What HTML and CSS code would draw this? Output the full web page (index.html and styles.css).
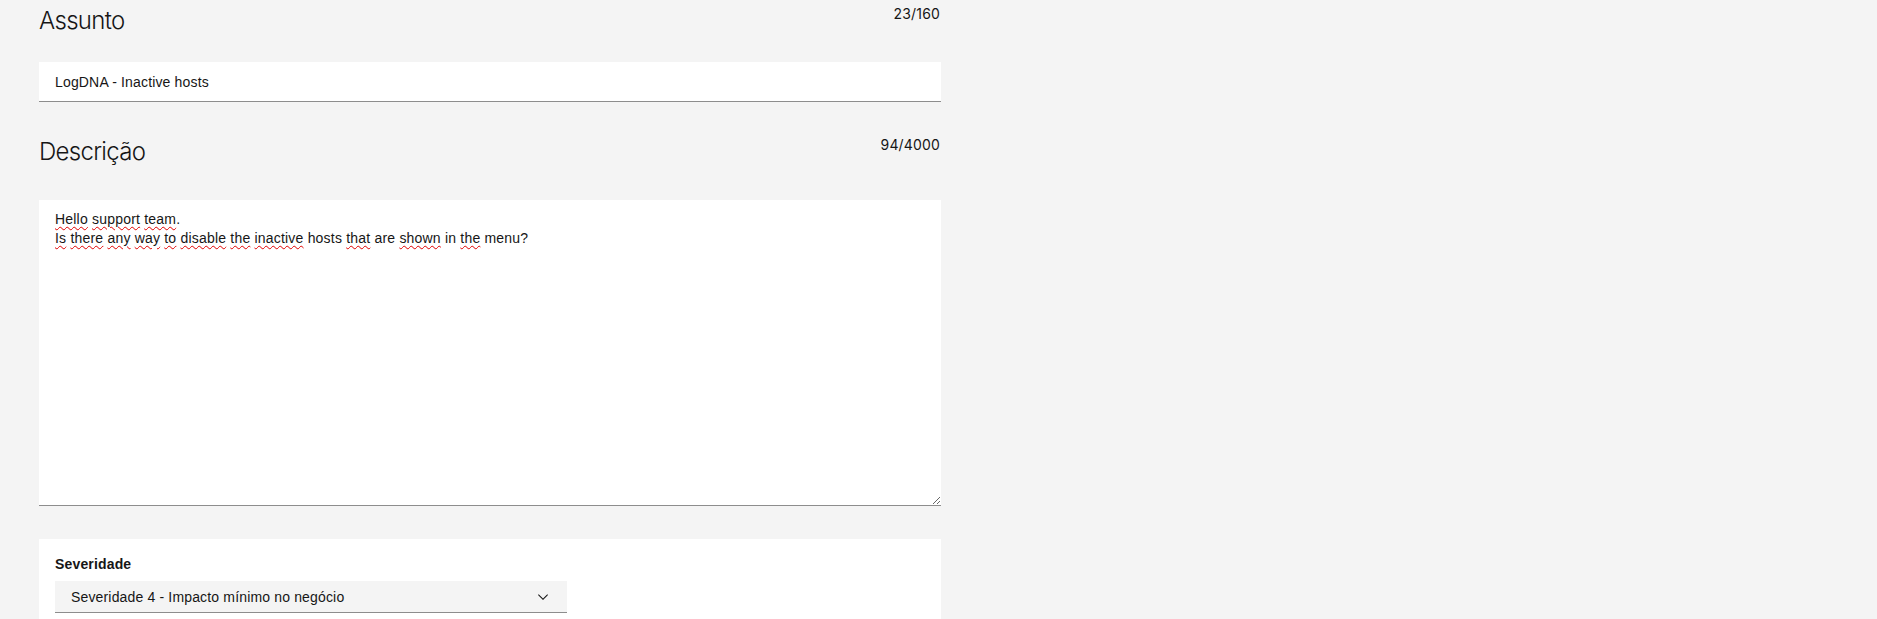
FILE: index.html
```html
<!DOCTYPE html>
<html lang="pt">
<head>
<meta charset="utf-8">
<title>Caso de suporte</title>
<link rel="stylesheet" href="styles.css">
</head>
<body>
<main class="form">
  <section class="field">
    <div class="field-header">
      <h2 class="field-title">Assunto</h2>
      <span class="counter">23/160</span>
    </div>
    <div class="text-input">LogDNA - Inactive hosts</div>
  </section>

  <section class="field field--desc">
    <div class="field-header">
      <h2 class="field-title">Descrição</h2>
      <span class="counter">94/4000</span>
    </div>
    <div class="text-area"><span class="sp">Hello</span> <span class="sp">support</span> <span class="sp">team</span>.<br><span class="sp">Is</span> <span class="sp">there</span> <span class="sp">any</span> <span class="sp">way</span> <span class="sp">to</span> <span class="sp">disable</span> <span class="sp">the</span> <span class="sp">inactive</span> hosts <span class="sp">that</span> are <span class="sp">shown</span> in <span class="sp">the</span> menu?</div>
  </section>

  <section class="card">
    <label class="card-label">Severidade</label>
    <div class="select">
      <span class="select-value">Severidade 4 - Impacto mínimo no negócio</span>
      <svg class="chevron" width="16" height="16" viewBox="0 0 16 16" aria-hidden="true"><path d="M8 11L3 6 3.7 5.3 8 9.6 12.3 5.3 13 6z" fill="#161616"/></svg>
    </div>
  </section>
</main>
</body>
</html>
```

FILE: styles.css
```css
html, body {
  margin: 0;
  padding: 0;
  overflow: hidden;
  background: #f4f4f4;
}

body {
  font-family: "Liberation Sans", Arial, sans-serif;
  color: #161616;
}

.form {
  width: 902px;
  margin-left: 39px;
  padding-top: 5px;
}

.field-header {
  display: flex;
  justify-content: space-between;
  align-items: flex-start;
}

.field-title {
  margin: 0;
  font-family: Inter, "Liberation Sans", sans-serif;
  font-size: 24px;
  line-height: 32px;
  font-weight: 300;
  letter-spacing: -0.7px;
}

.counter {
  font-family: Inter, "Liberation Sans", sans-serif;
  font-size: 14px;
  line-height: 18px;
  letter-spacing: 0.16px;
  padding-right: 1px;
}

.text-input {
  margin-top: 25px;
  height: 39px;
  background: #fff;
  border-bottom: 1px solid #8d8d8d;
  display: flex;
  align-items: center;
  padding: 0 16px;
  font-size: 14px;
  letter-spacing: 0.16px;
}

.field--desc {
  margin-top: 34px;
}

.field--desc .text-area {
  margin-top: 32px;
}

.text-area {
  height: 306px;
  box-sizing: border-box;
  background: #fff;
  border-bottom: 1px solid #8d8d8d;
  padding: 10px 16px;
  font-size: 14px;
  line-height: 19px;
  letter-spacing: 0.2px;
  resize: vertical;
  overflow: auto;
}

.sp {
  text-decoration: underline wavy #e00000;
  text-decoration-thickness: 1px;
  text-underline-offset: 2px;
}

.card {
  margin-top: 33px;
  background: #fff;
  padding: 16px 16px 60px;
}

.card-label {
  display: block;
  font-size: 14px;
  line-height: 18px;
  font-weight: 700;
  letter-spacing: 0.16px;
  margin-bottom: 8px;
}

.select {
  width: 512px;
  height: 32px;
  box-sizing: border-box;
  background: #f4f4f4;
  border-bottom: 1px solid #8d8d8d;
  display: flex;
  align-items: center;
  justify-content: space-between;
  padding: 0 16px;
  font-size: 14px;
  letter-spacing: 0.16px;
}
```
